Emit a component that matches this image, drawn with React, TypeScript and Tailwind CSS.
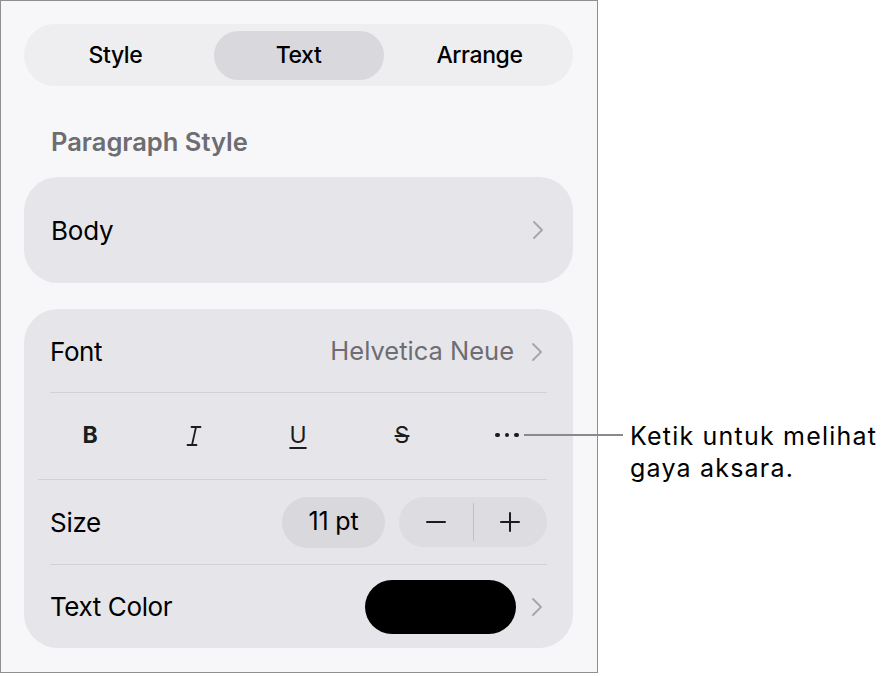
import React from "react";

const Chevron = () => (
  <svg width="14" height="22" viewBox="0 0 14 22" fill="none">
    <path d="M3 3 L11 11 L3 19" stroke="#a4a4a9" strokeWidth="1.8" strokeLinecap="round" strokeLinejoin="round" />
  </svg>
);

const ItalicIcon = () => (
  <svg width="18" height="22" viewBox="0 0 18 22" fill="none">
    <path d="M6.5 2 H15.5 M2.5 20 H11.5 M11 2 L7 20" stroke="#1c1c1e" strokeWidth="1.8" strokeLinecap="round" />
  </svg>
);

export default function App() {
  return (
    <div
      className="relative w-[891px] h-[676px] bg-white text-black"
      style={{ fontFamily: "Inter, 'Noto Sans', 'Liberation Sans', sans-serif" }}
    >
      <div className="w-[598px] h-[673px] border border-[#8e8e93] bg-[#f7f7f9] pl-[23px] pr-[24px] pt-[23px]">
        {/* Segmented control */}
        <div className="h-[62px] rounded-full bg-[#eeeef0] grid grid-cols-3 items-center px-[6px]">
          <div className="flex justify-center">
            <div className="h-[49px] w-[170px] flex items-center justify-center text-[23px] font-medium tracking-[-0.4px] pr-[8px]">Style</div>
          </div>
          <div className="flex justify-center">
            <div className="h-[49px] w-[170px] rounded-full bg-[#d9d9dd] flex items-center justify-center text-[23px] font-medium tracking-[-0.4px]">Text</div>
          </div>
          <div className="flex justify-center">
            <div className="h-[49px] w-[170px] flex items-center justify-center text-[23px] font-medium tracking-[-0.4px] pl-[4px]">Arrange</div>
          </div>
        </div>

        {/* Paragraph Style */}
        <div className="pl-[27px] pt-[40px] pb-[19px] h-[91px] text-[25.5px] font-semibold text-[#6d6d72] leading-[32px] tracking-[0px]">
          Paragraph Style
        </div>
        <div className="h-[106px] rounded-[34px] bg-[#e6e6ea] flex items-center justify-between pl-[27px] pr-[28px]">
          <span className="text-[26px] tracking-[-0.2px]">Body</span>
          <Chevron />
        </div>

        {/* Font card */}
        <div className="mt-[26px] h-[339px] rounded-[34px] bg-[#e6e6ea] px-[26px] flex flex-col">
          <div className="h-[84px] border-b border-[#d1d1d6] flex items-center justify-between pr-[3px] pt-[2px]">
            <span className="text-[26px] tracking-[-0.4px]">Font</span>
            <div className="flex items-center gap-[16px]">
              <span className="text-[25.5px] text-[#6d6d72] tracking-[0px]">Helvetica Neue</span>
              <Chevron />
            </div>
          </div>
          <div className="h-[87px] border-b border-[#d1d1d6] grid grid-cols-[104px_104px_104px_104px_104px] -ml-[12px] items-center pb-[2px]">
            <div className="flex justify-center">
              <span className="text-[23px] font-bold text-[#1c1c1e]">B</span>
            </div>
            <div className="flex justify-center pt-[2px]">
              <ItalicIcon />
            </div>
            <div className="flex justify-center">
              <span className="text-[23px] text-[#1c1c1e] underline underline-offset-[4px] decoration-[1.8px]">U</span>
            </div>
            <div className="flex justify-center">
              <span className="text-[23px] text-[#1c1c1e] line-through decoration-[1.6px] px-[2px]">S</span>
            </div>
            <div className="flex justify-center items-center gap-[5px] pl-[2px]">
              <span className="w-[4.5px] h-[4.5px] rounded-full bg-[#1c1c1e]" />
              <span className="w-[4.5px] h-[4.5px] rounded-full bg-[#1c1c1e]" />
              <span className="w-[4.5px] h-[4.5px] rounded-full bg-[#1c1c1e]" />
            </div>
          </div>
          <div className="h-[85px] border-b border-[#d1d1d6] flex items-center justify-between">
            <span className="text-[26px] tracking-[-0.3px]">Size</span>
            <div className="flex items-center gap-[14px]">
              <div className="h-[51px] w-[103px] rounded-full bg-[#d9d9dd] flex items-center justify-center text-[25px] tracking-[-0.2px]">11 pt</div>
              <div className="h-[50px] w-[148px] rounded-full bg-[#dddde1] flex items-center">
                <div className="flex-1 flex items-center justify-center">
                  <div className="w-[20px] h-[2.4px] bg-[#1c1c1e] rounded" />
                </div>
                <div className="w-px h-[38px] bg-[#bfbfc4]" />
                <div className="flex-1 flex items-center justify-center">
                  <div className="relative w-[20px] h-[20px]">
                    <div className="absolute left-0 top-[8.8px] w-[20px] h-[2.4px] bg-[#1c1c1e] rounded" />
                    <div className="absolute top-0 left-[8.8px] h-[20px] w-[2.4px] bg-[#1c1c1e] rounded" />
                  </div>
                </div>
              </div>
            </div>
          </div>
          <div className="h-[83px] flex items-center justify-between pr-[3px]">
            <span className="text-[26px] tracking-[-0.4px]">Text Color</span>
            <div className="flex items-center gap-[14px]">
              <div className="w-[151px] h-[54px] rounded-full bg-black" />
              <Chevron />
            </div>
          </div>
        </div>
      </div>

      {/* Callout */}
      <div className="absolute left-[524px] top-[434px] w-[99px] h-[1.5px] bg-[#8a8a8e]" />
      <div className="absolute left-[630px] top-[420px] text-[25px] leading-[32px] text-black tracking-[1.2px]">
        <div>Ketik untuk melihat</div>
        <div>gaya aksara.</div>
      </div>
    </div>
  );
}
